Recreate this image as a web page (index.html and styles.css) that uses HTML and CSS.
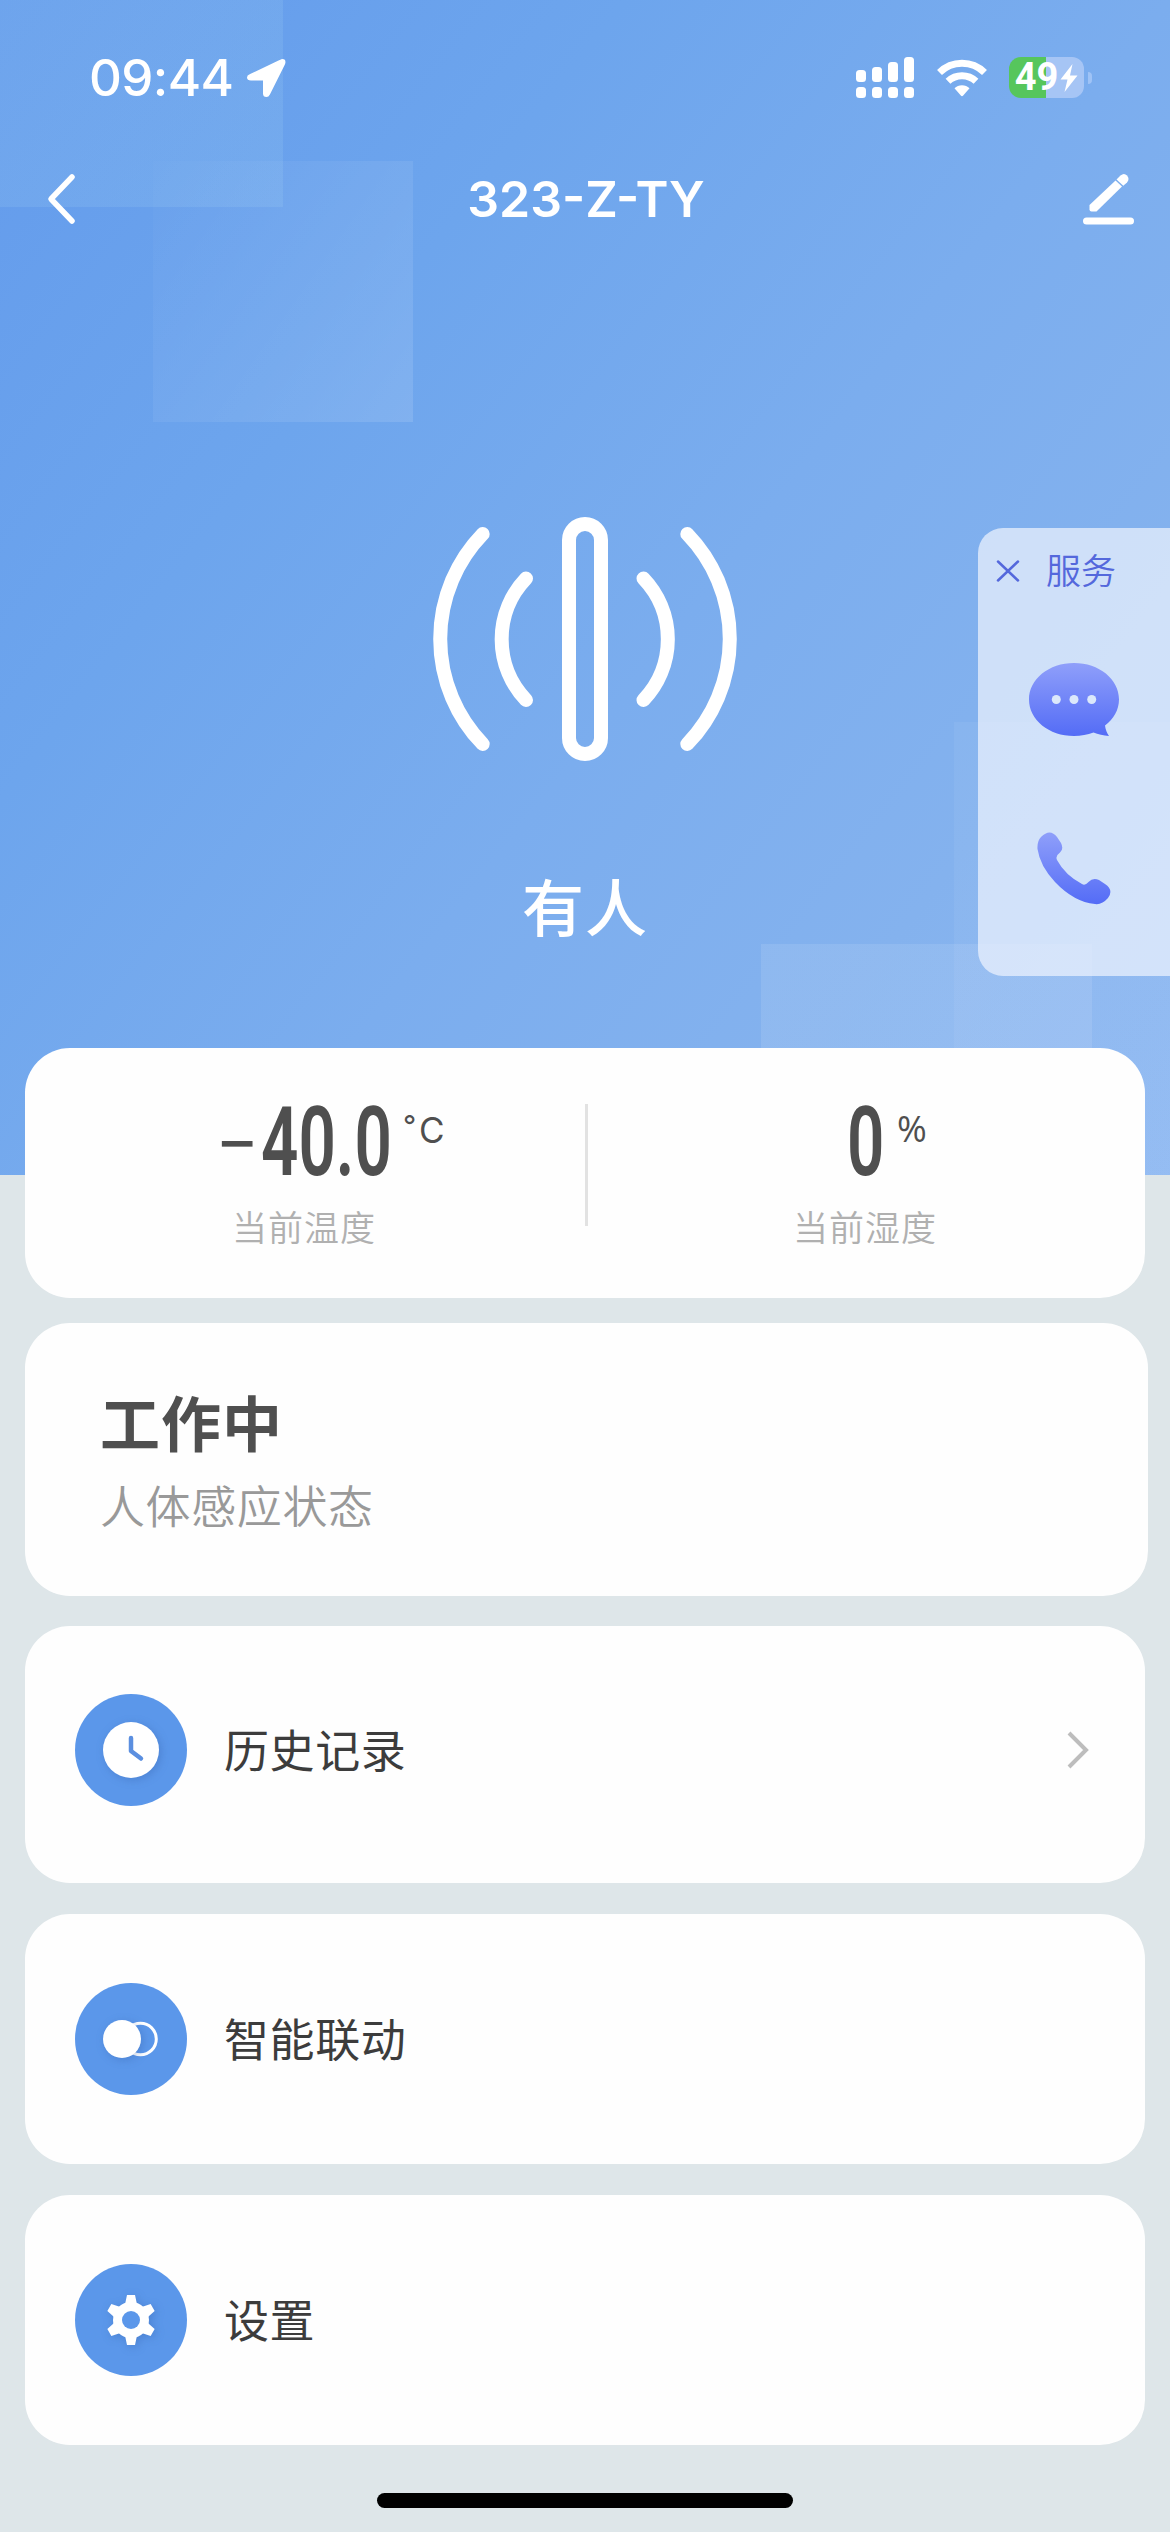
FILE: index.html
```html
<!DOCTYPE html>
<html lang="zh-CN">
<head>
<meta charset="utf-8">
<title>323-Z-TY</title>
<link rel="stylesheet" href="styles.css">
</head>
<body>
<div class="screen">
  <div class="status-bar">
    <span class="time">09:44</span>
    <svg class="location" width="40" height="40" viewBox="0 0 40 40"><path d="M34 3 4 17.200Q2 18 2 19.500 2 21.500 5 21.500H18V35.500Q18 38 20.500 38 22 38 23 36L38 6Q39 3.500 37.800 2.300 36.500 1.500 34 3Z" fill="#fff" stroke="#fff" stroke-width="2" stroke-linejoin="round"/></svg>
    <div class="indicators">
      <svg width="58" height="41" viewBox="0 0 58 41" fill="#fff">
        <rect x="0" y="13" width="10" height="12" rx="3.500"/><rect x="16" y="10" width="10" height="15" rx="3.500"/><rect x="32" y="5" width="10" height="20" rx="3.500"/><rect x="48" y="0" width="10" height="25" rx="3.500"/>
        <rect x="0" y="30" width="10" height="11" rx="3.500"/><rect x="16" y="30" width="10" height="11" rx="3.500"/><rect x="32" y="30" width="10" height="11" rx="3.500"/><rect x="48" y="30" width="10" height="11" rx="3.500"/>
      </svg>
      <svg class="wifi" width="52" height="38" viewBox="0 0 52 38">
        <path d="M3.500 13.500A32 32 0 0 1 48.500 13.500" fill="none" stroke="#fff" stroke-width="7"/>
        <path d="M12 22.200A20.500 20.500 0 0 1 40 22.200" fill="none" stroke="#fff" stroke-width="7"/>
        <path d="M18.500 29.300A10.500 10.500 0 0 1 33.500 29.300L27.200 36.500Q26 37.800 24.800 36.500Z" fill="#fff"/>
      </svg>
      <div class="battery">
        <div class="battery-body">
          <span class="level">49</span>
          <svg width="18" height="28" viewBox="0 0 18 28"><path d="M12.500 0 .5 15.500H7.500L4.500 28 17.500 11.500H10Z" fill="#fff"/></svg>
        </div>
        <div class="battery-cap"></div>
      </div>
    </div>
  </div>

  <div class="nav">
    <svg width="32" height="52" viewBox="0 0 32 52"><path d="M26 4 5 26 26 48" fill="none" stroke="#fff" stroke-width="5.500" stroke-linecap="round" stroke-linejoin="round"/></svg>
    <h1 class="title">323-Z-TY</h1>
    <svg width="52" height="52" viewBox="0 0 52 52" fill="#fff">
      <path d="M6.500 32 32.500 7.500 39 13.500 13.500 38.500H8.500Q6.500 38.500 6.500 36.500Z"/>
      <path d="M33.500 6.500 37.500 2.500Q41-.5 44 2.500 47 6 44 9.500L40.300 12.800Z"/>
      <rect x="0" y="44.500" width="51" height="7" rx="3.500"/>
    </svg>
  </div>

  <div class="hero">
    <svg width="304" height="244" viewBox="433 517 304 244" fill="none" stroke="#fff" stroke-width="14" stroke-linecap="round">
      <rect x="569" y="524" width="32" height="230" rx="16"/>
      <path d="M482.700 534A151 151 0 0 0 482.700 744"/>
      <path d="M526 578.500A88 88 0 0 0 526 700"/>
      <path d="M643.500 578.500A88 88 0 0 1 643.500 700"/>
      <path d="M687.300 534A151 151 0 0 1 687.300 744"/>
    </svg>
    <p class="presence">有人</p>
  </div>

  <div class="card readings">
    <div class="reading">
      <div class="value temp"><span class="minus">−</span><span class="num num-temp"><span>40.0</span></span><span class="degree">°</span><span class="unit">C</span></div>
      <div class="caption">当前温度</div>
    </div>
    <div class="divider"></div>
    <div class="reading">
      <div class="value hum"><span class="num num-hum"><span>0</span></span><span class="unit percent">%</span></div>
      <div class="caption">当前湿度</div>
    </div>
  </div>

  <div class="card state">
    <div class="state-value">工作中</div>
    <div class="state-name">人体感应状态</div>
  </div>

  <div class="card row history">
    <svg class="row-icon" width="112" height="112" viewBox="0 0 112 112">
      <circle cx="56" cy="56" r="56" fill="#5b97ea"/>
      <circle class="raised" cx="56" cy="56" r="28" fill="#fff"/>
      <path d="M56 44V57L66 64.500" fill="none" stroke="#5b8fe0" stroke-width="4.500" stroke-linecap="round" stroke-linejoin="round"/>
    </svg>
    <span class="row-label">历史记录</span>
    <svg class="chevron" width="22" height="38" viewBox="0 0 22 38"><path d="M2 2 19 19 2 36" fill="none" stroke="#bdbdbd" stroke-width="4"/></svg>
  </div>

  <div class="card row linkage">
    <svg class="row-icon" width="112" height="112" viewBox="0 0 112 112">
      <circle cx="56" cy="56" r="56" fill="#5b97ea"/>
      <circle cx="65.500" cy="56" r="15.800" fill="none" stroke="#fff" stroke-width="3"/>
      <circle class="raised" cx="47" cy="56" r="19" fill="#fff"/>
    </svg>
    <span class="row-label">智能联动</span>
  </div>

  <div class="card row settings">
    <svg class="row-icon" width="112" height="112" viewBox="0 0 112 112">
      <circle cx="56" cy="56" r="56" fill="#5b97ea"/>
      <g class="raised" fill="#fff">
        <circle cx="56" cy="56" r="18"/>
        <path id="tooth" d="M52 31H60L61.800 39.500 65 46H47L50.200 39.500Z"/>
        <use href="#tooth" transform="rotate(60 56 56)"/><use href="#tooth" transform="rotate(120 56 56)"/><use href="#tooth" transform="rotate(180 56 56)"/><use href="#tooth" transform="rotate(240 56 56)"/><use href="#tooth" transform="rotate(300 56 56)"/>
      </g>
      <circle cx="56" cy="56" r="9" fill="#5b97ea"/>
    </svg>
    <span class="row-label">设置</span>
  </div>

  <div class="home-indicator"></div>

  <aside class="service">
    <div class="service-head">
      <svg width="24" height="22" viewBox="0 0 24 22"><path d="M2 1.500 22 20.500M22 1.500 2 20.500" stroke="#5468dc" stroke-width="2.500" stroke-linecap="round"/></svg>
      <span>服务</span>
    </div>
    <svg class="chat" width="90" height="74" viewBox="0 0 90 74">
      <defs><linearGradient id="violet" x1="0" y1="0" x2="0" y2="1"><stop offset="0" stop-color="#8f9ffa"/><stop offset="1" stop-color="#546cf6"/></linearGradient></defs>
      <path d="M45 0C70 0 90 16 90 36.500 90 47 84.500 56 76 62.500 76.500 66.500 78 70 80 73 74.500 72.500 69 71.500 64.500 69.500 58.500 71.800 52 73 45 73 20 73 0 57 0 36.500 0 16 20 0 45 0Z" fill="url(#violet)"/>
      <g fill="#dbe8fb"><circle cx="27.300" cy="36.500" r="4.500"/><circle cx="45" cy="36.500" r="4.500"/><circle cx="62.700" cy="36.500" r="4.500"/></g>
    </svg>
    <svg class="phone" width="74" height="74" viewBox="0 0 74 74">
      <path d="M4 5Q13-4 20 5L24 11Q27 17 23 20.500 18 24 20 28 28 43 45 52 48 54 51.500 50 56 45 62 48L68 52Q77 58 71 66 65 73 58 72 37 70 18 50 3 34 .5 17 0 9 4 5Z" fill="url(#violet)"/>
    </svg>
  </aside>
</div>
</body>
</html>
```
FILE: styles.css
```css
* { box-sizing: border-box; }

body {
  margin: 0;
  font-family: "Inter", "Noto Sans CJK SC", sans-serif;
}

svg { display: block; flex: none; }

.screen {
  position: relative;
  display: flex;
  flex-direction: column;
  width: 1170px;
  height: 2532px;
  overflow: hidden;
  background:
    linear-gradient(90deg, rgba(205, 245, 245, .1), rgba(205, 245, 245, .1)) 0 0 / 283px 207px no-repeat,
    linear-gradient(125deg, rgba(255, 255, 255, .01), rgba(255, 255, 255, .12)) 153px 161px / 260px 261px no-repeat,
    linear-gradient(90deg, rgba(255, 255, 255, .05), rgba(255, 255, 255, .05)) 954px 722px / 216px 453px no-repeat,
    linear-gradient(90deg, rgba(255, 255, 255, .1), rgba(255, 255, 255, .1)) 761px 944px / 331px 231px no-repeat,
    linear-gradient(128deg, #639bec 0%, #6da5ed 30%, #7badee 56%, #84b2ee 78%, #8fb9f2 100%) 0 0 / 1170px 1175px no-repeat,
    #dee6e9;
}

.status-bar {
  display: flex;
  align-items: center;
  height: 155px;
  padding: 0 78px 0 89px;
  color: #fff;
}

.time {
  font-size: 51px;
  font-weight: 500;
  letter-spacing: -.600px;
  line-height: 60px;
}

.location { margin-left: 13px; }

.indicators {
  display: flex;
  align-items: center;
  margin-left: auto;
}

.wifi { margin-left: 22px; }

.battery {
  display: flex;
  align-items: center;
  margin-left: 21px;
}

.battery-body {
  display: flex;
  align-items: center;
  justify-content: center;
  gap: 2px;
  width: 75px;
  height: 41px;
  border-radius: 12px;
  background: linear-gradient(90deg, #56c65c 50%, #a6c5f5 50%);
}

.level {
  font-family: "Roboto", sans-serif;
  font-size: 38px;
  font-weight: 700;
  line-height: 41px;
}

.battery-cap {
  width: 4px;
  height: 12px;
  margin-left: 4px;
  border-radius: 0 4px 4px 0;
  background: #9fc3f6;
}

.nav {
  display: grid;
  grid-template-columns: 32px 1fr 52px;
  align-items: center;
  height: 88px;
  padding: 0 35px 0 46px;
  color: #fff;
}

.title {
  margin: 0;
  padding-left: 11px;
  font-size: 50px;
  font-weight: 600;
  line-height: 60px;
  text-align: center;
}

.hero {
  display: flex;
  flex-direction: column;
  align-items: center;
  height: 805px;
  padding-top: 274px;
  color: #fff;
}

.presence {
  margin: 104px 0 0;
  font-size: 62px;
  font-weight: 500;
  line-height: 90px;
  letter-spacing: 1px;
}

.card {
  flex: none;
  width: 1120px;
  margin-left: 25px;
  border-radius: 45px;
  background: #fefefe;
}

.readings {
  display: grid;
  grid-template-columns: 560px 3px 557px;
  height: 250px;
}

.divider {
  height: 122px;
  margin-top: 56px;
  background: #e2e2e2;
}

.reading {
  display: flex;
  flex-direction: column;
  padding-top: 50px;
}

.value {
  display: flex;
  height: 105px;
  color: #4f4f4f;
}

.temp { padding-left: 190px; }
.hum { padding-left: 259px; }

.minus {
  width: 46px;
  font-size: 67px;
  line-height: 82px;
  font-weight: 400;
}

.num {
  font-family: "Roboto", sans-serif;
  font-size: 97px;
  font-weight: 600;
  line-height: 88px;
}

.num > span {
  display: block;
  transform: scaleX(.675);
  transform-origin: 0 50%;
}

.num-temp { width: 142px; }
.num-hum { width: 50px; }

.degree, .unit {
  font-size: 35px;
  line-height: 64px;
}

.degree {
  width: 16px;
  font-size: 29px;
  line-height: 56px;
}

.percent {
  font-family: "Open Sans", sans-serif;
  font-size: 36px;
  line-height: 62px;
}

.caption {
  font-size: 35px;
  font-weight: 350;
  line-height: 50px;
  letter-spacing: 1px;
  color: #b0b0b0;
}

.reading:first-child .caption { padding-left: 207px; }
.reading:last-child .caption { padding-left: 205px; }

.state {
  width: 1123px;
  height: 273px;
  margin-top: 25px;
  padding: 58px 0 0 75px;
}

.state-value {
  font-size: 60px;
  font-weight: 600;
  line-height: 88px;
  letter-spacing: 1px;
  color: #4f4f4f;
}

.state-name {
  margin-top: 7px;
  font-size: 45px;
  font-weight: 350;
  line-height: 64px;
  letter-spacing: .6px;
  color: #999;
}

.row {
  display: flex;
  align-items: center;
  padding: 0 56px 0 50px;
}

.history {
  height: 257px;
  margin-top: 30px;
  padding-bottom: 9px;
}

.linkage {
  height: 250px;
  margin-top: 31px;
}

.settings {
  height: 250px;
  margin-top: 31px;
}

.row-icon .raised { filter: drop-shadow(2px 2px 4px rgba(40, 80, 150, .28)); }

.row-label {
  margin-left: 37px;
  padding-top: 3px;
  font-size: 45px;
  line-height: 64px;
  letter-spacing: .6px;
  color: #3c3c3c;
}

.chevron { margin-left: auto; }

.home-indicator {
  flex: none;
  width: 416px;
  height: 15px;
  margin: 48px 0 0 377px;
  border-radius: 8px;
  background: #000;
}

/* Floating panel docked to the right edge, over the hero area. */
.service {
  position: absolute;
  top: 528px;
  right: 0;
  width: 192px;
  height: 448px;
  padding-top: 18px;
  border-radius: 25px 0 0 25px;
  background: rgba(237, 243, 253, .72);
}

.service-head {
  display: flex;
  align-items: center;
  gap: 26px;
  height: 49px;
  padding-left: 18px;
  font-size: 35px;
  font-weight: 350;
  line-height: 50px;
  color: #5468dc;
}

.chat { margin: 68px 0 0 51px; }
.phone { margin: 95px 0 0 59px; }
```
